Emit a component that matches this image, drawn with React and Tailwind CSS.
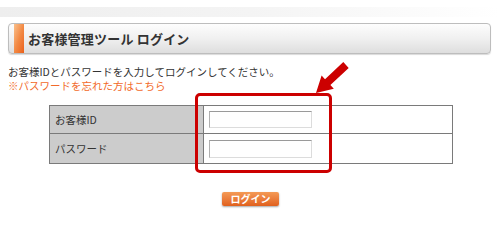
export default function App() {
  return (
    <div className="relative w-[500px] h-[244px] bg-white text-[#333] font-['Noto_Sans_CJK_JP','Noto_Sans',sans-serif] overflow-hidden">
      {/* top band */}
      <div className="mt-[7px] h-[10px] bg-linear-to-r from-[#eeeeee] via-[#f4f4f4] to-white" />

      {/* title bar */}
      <div className="mt-[6px] ml-[8px] w-[483px] h-[31px] flex items-center rounded-[4px] border border-[#bdbdbd] bg-linear-to-b from-[#fdfdfd] via-[#f0f0f0] to-[#dedede] shadow-[0_1px_1px_rgba(0,0,0,0.15)]">
        <div className="ml-[5px] w-[10px] self-stretch bg-linear-to-br from-[#f9c08a] via-[#f28a45] to-[#ea5f15]" />
        <span className="ml-[4px] text-[13px] font-bold text-[#333] tracking-[0.2px]">お客様管理ツール ログイン</span>
      </div>

      {/* intro */}
      <div className="mt-[11px] ml-[8px] text-[10.5px] leading-[14px]">
        <p>お客様IDとパスワードを入力してログインしてください。</p>
        <p className="text-[#f26a2a]">※パスワードを忘れた方はこちら</p>
      </div>

      {/* form table */}
      <div className="mt-[12px] ml-[49px] w-[404px] border border-[#7a7a7a] text-[10.5px]">
        <div className="flex h-[28px] border-b border-[#7a7a7a]">
          <div className="w-[154px] bg-[#cccccc] border-r border-[#7a7a7a] flex items-center pl-[5px]">お客様ID</div>
          <div className="flex-1 flex items-center pl-[5px]">
            <input className="w-[103px] h-[17px] border border-[#dcdcdc] border-t-[#9a9a9a] border-l-[#b0b0b0] bg-white" />
          </div>
        </div>
        <div className="flex h-[29px]">
          <div className="w-[154px] bg-[#cccccc] border-r border-[#7a7a7a] flex items-center pl-[5px]">パスワード</div>
          <div className="flex-1 flex items-center pl-[5px]">
            <input type="password" className="w-[103px] h-[18px] border border-[#dcdcdc] border-t-[#9a9a9a] border-l-[#b0b0b0] bg-white" />
          </div>
        </div>
      </div>

      {/* button */}
      <div className="mt-[28px] flex justify-center">
        <button className="ml-[1px] w-[57px] h-[14px] rounded-[2px] bg-linear-to-b from-[#f49a55] to-[#e0601c] text-white text-[10px] leading-[14px] font-bold shadow-[0_1px_2px_rgba(0,0,0,0.35)]">
          ログイン
        </button>
      </div>

      {/* annotation overlay */}
      <div className="absolute left-[195px] top-[93px] w-[137px] h-[80px] border-[3px] border-[#cc0000] rounded-[5px]" />
      <svg className="absolute left-[310px] top-[58px]" width="45" height="40" viewBox="310 58 45 40">
        <polygon
          fill="#cc0000"
          points="316,93 333.8,88.7 330.4,85 348.7,67.9 343.3,62.1 325,79.2 321.6,75.5"
        />
      </svg>
    </div>
  );
}
